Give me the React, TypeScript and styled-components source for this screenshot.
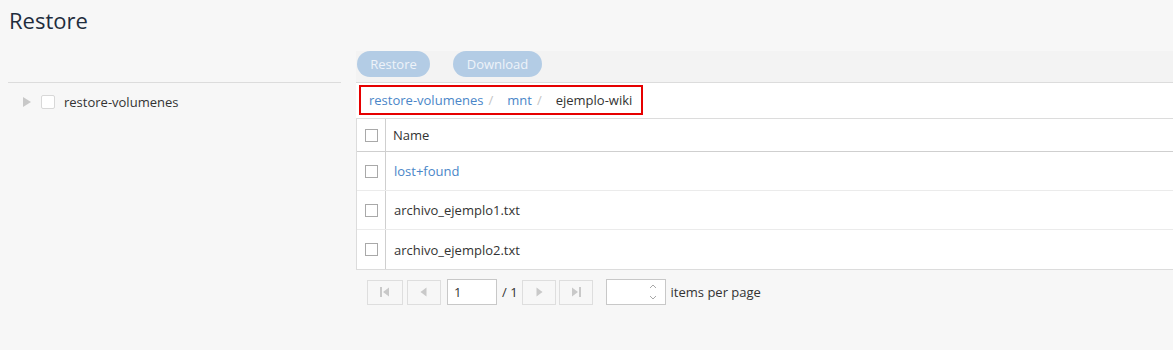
import styled, { createGlobalStyle } from 'styled-components';

const GlobalStyle = createGlobalStyle`
  html, body {
    margin: 0;
    padding: 0;
    background: #f7f7f7;
    font-family: 'Open Sans', 'Noto Sans', sans-serif;
    color: #333;
    overflow: hidden;
  }
  * { box-sizing: border-box; }
`;

const Page = styled.div`
  width: 1173px;
  height: 350px;
  padding-left: 8px;
`;

const Title = styled.h1`
  margin: 0;
  padding: 6px 0 0 1px;
  height: 51px;
  font-size: 22px;
  font-weight: 400;
  color: #1f2d3d;
  line-height: 28px;
`;

const Main = styled.div`
  display: grid;
  grid-template-columns: 333px 1fr;
  column-gap: 15px;
`;

const TreePanel = styled.div`
  padding-top: 31px;
`;

const TreeList = styled.div`
  border-top: 1px solid #dcdcdc;
  padding-top: 11px;
`;

const TreeItem = styled.div`
  display: flex;
  align-items: center;
  height: 16px;
  padding-left: 15px;
  font-size: 13px;
  color: #333;
`;

const Expander = styled.span`
  width: 0;
  height: 0;
  border-top: 5px solid transparent;
  border-bottom: 5px solid transparent;
  border-left: 8px solid #c8c8c8;
  margin-right: 10px;
`;

const Box = styled.span<{ $size?: number }>`
  display: inline-block;
  width: ${({ $size }) => $size ?? 13}px;
  height: ${({ $size }) => $size ?? 13}px;
  border: 1px solid ${({ $size }) => ($size ? '#d8d8d8' : '#a9a9a9')};
  border-radius: ${({ $size }) => ($size ? '2px' : '0')};
  background: #fff;
  flex-shrink: 0;
`;

const TreeLabel = styled.span`
  margin-left: 9px;
`;

const RightPanel = styled.div`
  display: flex;
  flex-direction: column;
`;

const Toolbar = styled.div`
  display: flex;
  gap: 23px;
  height: 32px;
  padding-left: 1px;
  background: #f3f3f3;
  border-bottom: 1px solid #dcdcdc;
`;

const PillButton = styled.button<{ $w: number }>`
  width: ${({ $w }) => $w}px;
  height: 26px;
  border: none;
  border-radius: 13px;
  background: #b3cce5;
  color: #eef3f9;
  font-family: inherit;
  font-size: 13px;
  padding: 0;
`;

const CrumbBar = styled.div`
  background: #fff;
  height: 35px;
  padding: 2px 0 0 3px;
`;

const CrumbBox = styled.div`
  display: inline-flex;
  align-items: center;
  height: 30px;
  width: 284px;
  border: 2px solid #e60000;
  padding-left: 8px;
  font-size: 13px;
`;

const CrumbLink = styled.span`
  color: #4a86c8;
`;

const CrumbSep = styled.span`
  color: #c4c4c4;
  margin: 0 14px 0 5px;
`;

const CrumbCurrent = styled.span`
  color: #333;
`;

const Table = styled.div`
  background: #fff;
  border: 1px solid #dcdcdc;
  border-right: none;
`;

const Row = styled.div<{ $head?: boolean }>`
  display: grid;
  grid-template-columns: 29px 1fr;
  height: ${({ $head }) => ($head ? 33 : 39)}px;
  border-bottom: 1px solid ${({ $head }) => ($head ? '#cfcfcf' : '#ebebeb')};
  &:last-child {
    border-bottom: none;
    height: 39px;
  }
`;

const CheckCell = styled.div`
  display: flex;
  align-items: center;
  justify-content: center;
  border-right: 1px solid #cfcfcf;
  padding-left: 1px;
`;

const NameCell = styled.div<{ $link?: boolean; $head?: boolean }>`
  display: flex;
  align-items: center;
  padding-left: ${({ $head }) => ($head ? 7 : 8)}px;
  font-size: 13px;
  color: ${({ $link }) => ($link ? '#4a86c8' : '#333')};
`;

const Pager = styled.div`
  display: flex;
  align-items: center;
  height: 26px;
  margin-top: 9px;
  padding-left: 11px;
  font-size: 13px;
  color: #333;
`;

const PageBtn = styled.span<{ $gap?: number; $w?: number }>`
  display: flex;
  align-items: center;
  justify-content: center;
  width: ${({ $w }) => $w ?? 34}px;
  height: 25px;
  border: 1px solid #dedede;
  background: #f7f7f7;
  margin-right: ${({ $gap }) => $gap ?? 3}px;
`;

const PageInput = styled.span`
  display: flex;
  align-items: center;
  width: 50px;
  height: 26px;
  border: 1px solid #c8c8c8;
  background: #fff;
  padding-left: 6px;
`;

const PageOf = styled.span`
  margin: 0 4px 0 5px;
`;

const SizeInput = styled.span`
  display: flex;
  align-items: center;
  justify-content: flex-end;
  width: 60px;
  height: 26px;
  border: 1px solid #c8c8c8;
  background: #fff;
  margin-left: 13px;
  padding-right: 8px;
`;

const SizeLabel = styled.span`
  margin-left: 5px;
`;

const iconColor = '#c9c9c9';

function PagerIcon({ kind }: { kind: 'first' | 'prev' | 'next' | 'last' }) {
  const left = kind === 'first' || kind === 'prev';
  return (
    <svg width="12" height="12" viewBox="0 0 12 12">
      {kind === 'first' && <rect x="1" y="1" width="2" height="10" fill={iconColor} />}
      {kind === 'last' && <rect x="9" y="1" width="2" height="10" fill={iconColor} />}
      {left ? (
        <polygon points={kind === 'first' ? '10,1.5 10,10.5 4,6' : '8.5,1.5 8.5,10.5 2.5,6'} fill={iconColor} />
      ) : (
        <polygon points={kind === 'last' ? '2,1.5 2,10.5 8,6' : '3.5,1.5 3.5,10.5 9.5,6'} fill={iconColor} />
      )}
    </svg>
  );
}

function Spinner() {
  return (
    <svg width="8" height="18" viewBox="0 0 8 18">
      <polyline points="1,5 4,2 7,5" fill="none" stroke="#a8a8a8" strokeWidth="1" />
      <polyline points="1,13 4,16 7,13" fill="none" stroke="#a8a8a8" strokeWidth="1" />
    </svg>
  );
}

const files = [
  { name: 'lost+found', dir: true },
  { name: 'archivo_ejemplo1.txt', dir: false },
  { name: 'archivo_ejemplo2.txt', dir: false },
];

export default function App() {
  return (
    <Page>
      <GlobalStyle />
      <Title>Restore</Title>
      <Main>
        <TreePanel>
          <TreeList>
            <TreeItem>
              <Expander />
              <Box $size={14} />
              <TreeLabel>restore-volumenes</TreeLabel>
            </TreeItem>
          </TreeList>
        </TreePanel>
        <RightPanel>
          <Toolbar>
            <PillButton $w={73}>Restore</PillButton>
            <PillButton $w={89}>Download</PillButton>
          </Toolbar>
          <CrumbBar>
            <CrumbBox>
              <CrumbLink>restore-volumenes</CrumbLink>
              <CrumbSep>/</CrumbSep>
              <CrumbLink>mnt</CrumbLink>
              <CrumbSep>/</CrumbSep>
              <CrumbCurrent>ejemplo-wiki</CrumbCurrent>
            </CrumbBox>
          </CrumbBar>
          <Table>
            <Row $head>
              <CheckCell>
                <Box />
              </CheckCell>
              <NameCell $head>Name</NameCell>
            </Row>
            {files.map(f => (
              <Row key={f.name}>
                <CheckCell>
                  <Box />
                </CheckCell>
                <NameCell $link={f.dir}>{f.name}</NameCell>
              </Row>
            ))}
          </Table>
          <Pager>
            <PageBtn $w={36} $gap={4}>
              <PagerIcon kind="first" />
            </PageBtn>
            <PageBtn $gap={6}>
              <PagerIcon kind="prev" />
            </PageBtn>
            <PageInput>1</PageInput>
            <PageOf>/ 1</PageOf>
            <PageBtn>
              <PagerIcon kind="next" />
            </PageBtn>
            <PageBtn $gap={0}>
              <PagerIcon kind="last" />
            </PageBtn>
            <SizeInput>
              <Spinner />
            </SizeInput>
            <SizeLabel>items per page</SizeLabel>
          </Pager>
        </RightPanel>
      </Main>
    </Page>
  );
}
